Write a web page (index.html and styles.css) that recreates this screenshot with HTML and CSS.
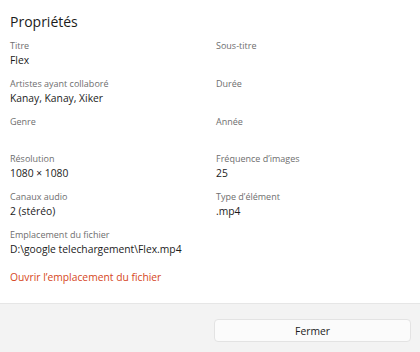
FILE: index.html
```html
<!DOCTYPE html>
<html lang="fr">
<head>
<meta charset="utf-8">
<link rel="stylesheet" href="styles.css">
</head>
<body>
<div class="dialog">
  <div class="content">
    <h1 class="title">Propriétés</h1>
    <div class="grid">
      <div class="field"><div class="label">Titre</div><div class="value">Flex</div></div>
      <div class="field"><div class="label">Sous-titre</div><div class="value"></div></div>
      <div class="field"><div class="label">Artistes ayant collaboré</div><div class="value">Kanay, Kanay, Xiker</div></div>
      <div class="field"><div class="label">Durée</div><div class="value"></div></div>
      <div class="field"><div class="label">Genre</div><div class="value"></div></div>
      <div class="field"><div class="label">Année</div><div class="value"></div></div>
      <div class="field"><div class="label">Résolution</div><div class="value">1080 × 1080</div></div>
      <div class="field"><div class="label">Fréquence d’images</div><div class="value">25</div></div>
      <div class="field"><div class="label">Canaux audio</div><div class="value">2 (stéréo)</div></div>
      <div class="field"><div class="label">Type d’élément</div><div class="value">.mp4</div></div>
      <div class="field wide"><div class="label">Emplacement du fichier</div><div class="value">D:\google telechargement\Flex.mp4</div></div>
    </div>
    <a class="link" href="#">Ouvrir l’emplacement du fichier</a>
  </div>
  <div class="footer">
    <button class="btn" type="button">Fermer</button>
  </div>
</div>
</body>
</html>
```
FILE: styles.css
```css
html, body {
  margin: 0;
  padding: 0;
  background: #ffffff;
}
body {
  font-family: "Open Sans", "Noto Sans", sans-serif;
  color: #1b1b1b;
  width: 420px;
  height: 352px;
  overflow: hidden;
}
.dialog {
  display: flex;
  flex-direction: column;
  height: 352px;
}
.content {
  flex: 1;
  padding: 12px 10px 0 10px;
}
.title {
  margin: 0 0 7px 0;
  font-size: 14px;
  font-weight: 400;
  line-height: 20px;
}
.grid {
  display: grid;
  grid-template-columns: 206px 1fr;
  row-gap: 9.8px;
}
.wide {
  grid-column: 1 / -1;
}
.label {
  font-size: 9px;
  line-height: 14px;
  color: #6e6e6e;
}
.value {
  font-size: 10.3px;
  line-height: 14px;
  min-height: 14px;
  color: #1b1b1b;
}
.link {
  display: inline-block;
  margin-top: 14px;
  font-size: 10.3px;
  line-height: 14px;
  color: #d6461c;
  text-decoration: none;
}
.footer {
  flex: none;
  height: 49px;
  box-sizing: border-box;
  border-top: 1px solid #e6e6e6;
  background: #f3f3f3;
  display: flex;
  justify-content: flex-end;
  align-items: flex-start;
  padding: 15px 9px 0 0;
}
.btn {
  width: 197px;
  height: 23px;
  border: 1px solid #e3e3e3;
  border-radius: 4px;
  background: #fbfbfb;
  font-family: inherit;
  font-size: 10.3px;
  color: #1b1b1b;
  padding: 0;
}
```
